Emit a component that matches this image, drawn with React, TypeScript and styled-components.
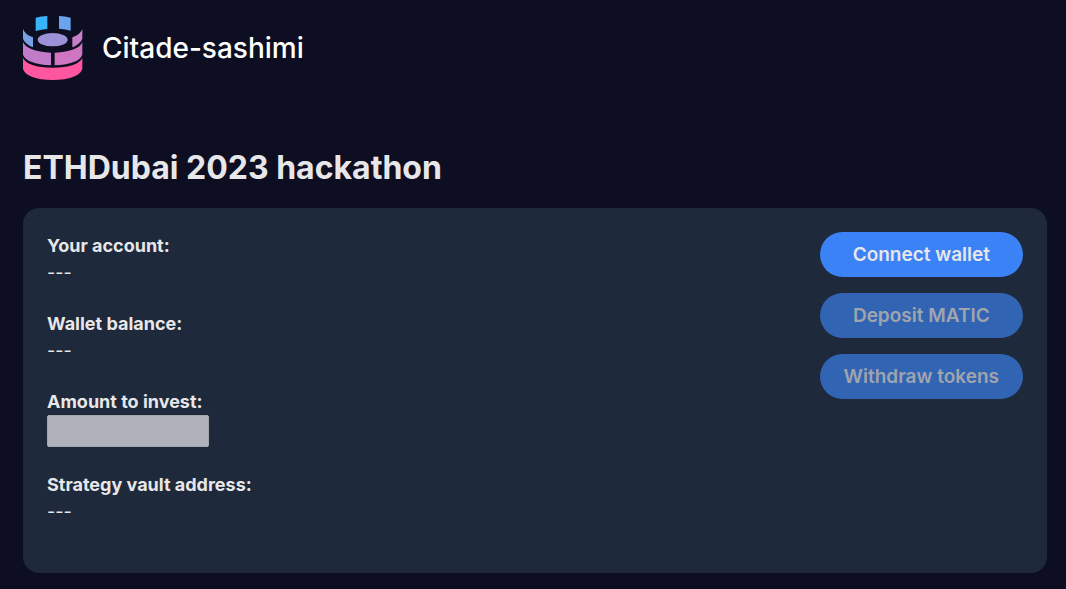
import React from "react";
import styled, { createGlobalStyle } from "styled-components";

const GlobalStyle = createGlobalStyle`
  *, *::before, *::after { box-sizing: border-box; }
  body {
    margin: 0;
    background: #0d0e22;
    color: #e7e7e9;
    font-family: Inter, "Liberation Sans", sans-serif;
    font-size: 18px;
    line-height: 27px;
  }
`;

const Page = styled.div`
  padding: 15px 19px 16px 23px;
`;

const Header = styled.header`
  display: flex;
  align-items: center;
  gap: 19px;
`;

const Brand = styled.span`
  color: #fff;
  font-size: 28px;
  font-weight: 500;
  line-height: 36px;
`;

const Title = styled.h1`
  margin: 64px 0 16px;
  font-size: 32px;
  font-weight: 700;
  line-height: 48px;
`;

const Card = styled.main`
  display: flex;
  justify-content: space-between;
  align-items: flex-start;
  padding: 24px;
  border-radius: 16px;
  background: #1e293b;
`;

const Details = styled.div`
  display: flex;
  flex-direction: column;
`;

const Field = styled.div`
  display: flex;
  flex-direction: column;
  align-items: flex-start;
  margin-bottom: 24px;
`;

const Label = styled.label`
  font-weight: 700;
`;

const AmountInput = styled.input`
  width: 162px;
  height: 32px;
  padding: 0 8px;
  border: 1px solid #a3a6ad;
  border-radius: 2px;
  background: #afb2ba;
  color: #1e293b;
  font: inherit;
`;

const Actions = styled.div`
  display: flex;
  flex-direction: column;
  gap: 16px;
`;

const ActionButton = styled.button`
  height: 45px;
  padding: 0 24px;
  border: 0;
  border-radius: 24px;
  background: #3b82f6;
  color: #e7e7e9;
  font: inherit;
  font-size: 19px;
  font-weight: 600;
  cursor: pointer;

  &:disabled {
    background: #3264b4;
    color: #a0a4ad;
    cursor: default;
  }
`;

function Logo() {
  return (
    <svg width="60" height="65" viewBox="39 30 180 195" aria-hidden="true">
      <path fill="#38b4fb" d="M77 38Q94 34 112 33V72Q94 73 77 78Z" />
      <path fill="#6ba3ed" d="M147 33Q165 34 182 38V77Q165 73 147 71Z" />
      <ellipse fill="#9d91d8" cx="128" cy="104" rx="45" ry="20" />
      <path fill="#78a0e7" d="M39 71Q43 87 69 97V127Q44 116 39 101Z" />
      <path fill="#c580c8" d="M217 71Q213 87 187 97V127Q212 116 217 101Z" />
      <path fill="#c27bc8" d="M39 111Q50 139 123 143V181Q50 177 39 149Z" />
      <path fill="#cf75c1" d="M217 111Q207 139 134 143V181Q207 177 217 149Z" />
      <path fill="#ff56a0" d="M39 159Q52 187 128 188Q204 187 217 159V192Q205 224 128 225Q51 224 39 192Z" />
    </svg>
  );
}

export default function App() {
  return (
    <>
      <GlobalStyle />
      <Page>
        <Header>
          <Logo />
          <Brand>Citade-sashimi</Brand>
        </Header>
        <Title>ETHDubai 2023 hackathon</Title>
        <Card>
          <Details>
            <Field>
              <Label as="strong">Your account:</Label>
              <span>---</span>
            </Field>
            <Field>
              <Label as="strong">Wallet balance:</Label>
              <span>---</span>
            </Field>
            <Field>
              <Label htmlFor="amount">Amount to invest:</Label>
              <AmountInput id="amount" type="text" />
            </Field>
            <Field>
              <Label as="strong">Strategy vault address:</Label>
              <span>---</span>
            </Field>
          </Details>
          <Actions>
            <ActionButton type="button">Connect wallet</ActionButton>
            <ActionButton type="button" disabled>Deposit MATIC</ActionButton>
            <ActionButton type="button" disabled>Withdraw tokens</ActionButton>
          </Actions>
        </Card>
      </Page>
    </>
  );
}
